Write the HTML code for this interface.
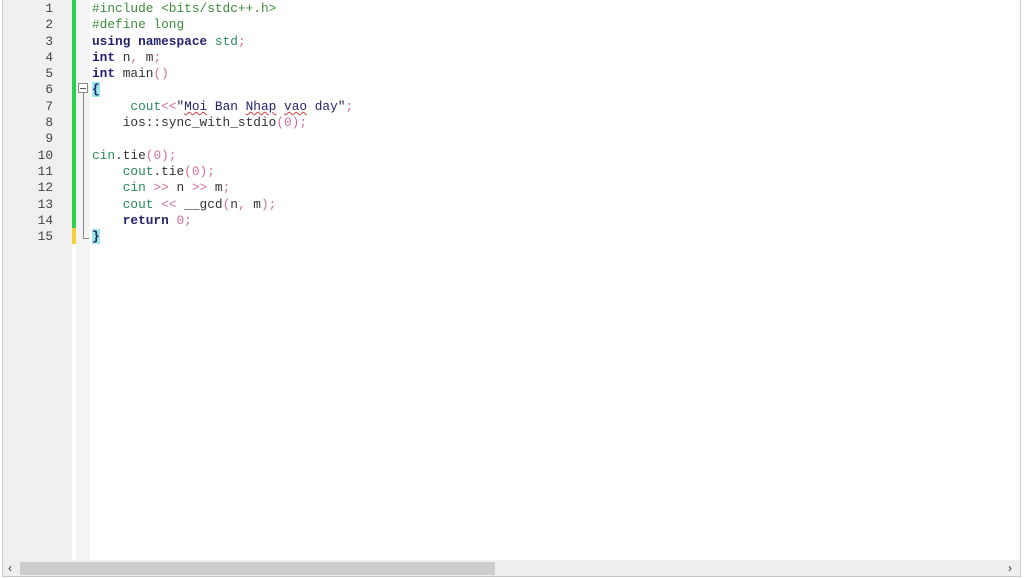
<!DOCTYPE html>
<html><head><meta charset="utf-8"><style>
html,body{margin:0;padding:0;width:1024px;height:578px;overflow:hidden;background:#fff;}
.frame{position:absolute;left:2px;top:0;width:1019px;height:577px;border-left:1px solid #c8c8c8;border-right:1px solid #c8c8c8;border-bottom:1px solid #c8c8c8;box-sizing:border-box;}
.gutter{position:absolute;left:3px;top:0;width:69px;height:560px;background:#f0f0f0;}
.fold{position:absolute;left:76px;top:0;width:14px;height:560px;background:#f4f4f4;}
.bar{position:absolute;left:72px;width:4px;background:#2ed04a;}
.nums{position:absolute;left:3px;top:1px;width:50px;text-align:right;font:12.8px/16.3px "Liberation Mono",monospace;color:#444;}
.code{position:absolute;left:92px;top:1px;font:12.8px/16.3px "Liberation Mono",monospace;color:#333;white-space:pre;}
.pp{color:#3c8c3c}
.kw{color:#22226e;font-weight:bold}
.op{color:#d0709a}
.st{color:#22226e}
.gr{color:#2a8a5a}
.sq{text-decoration:underline wavy #d04040;text-decoration-thickness:1px}
.hl{background:#9ee8e8}
.scroll{position:absolute;left:3px;top:560px;width:1017px;height:16px;background:#efefef;}
.thumb{position:absolute;left:20px;top:562px;width:475px;height:13px;background:#cdcdcd;}
.arr{position:absolute;top:560px;font:12px/16px "Liberation Sans",sans-serif;color:#333;}
</style></head><body>
<div class="frame"></div>
<div class="gutter"></div>
<div class="fold"></div>
<div class="bar" style="top:0;height:228px"></div>
<div class="bar" style="top:228px;height:16px;background:#f2d23a"></div>
<div style="position:absolute;left:78px;top:83px;width:10px;height:10px;border:1px solid #888;box-sizing:border-box;background:#fff"></div>
<div style="position:absolute;left:80px;top:88px;width:6px;height:1px;background:#555"></div>
<div style="position:absolute;left:83px;top:93px;width:1px;height:146px;background:#888"></div>
<div style="position:absolute;left:83px;top:238px;width:6px;height:1px;background:#888"></div>
<div class="nums">1<br>2<br>3<br>4<br>5<br>6<br>7<br>8<br>9<br>10<br>11<br>12<br>13<br>14<br>15</div>
<div class="code"><span class="pp">#include &lt;bits/stdc++.h&gt;</span>
<span class="pp">#define long</span>
<span class="kw">using namespace</span> <span class="gr">std</span><span class="op">;</span>
<span class="kw">int</span> n<span class="op">,</span> m<span class="op">;</span>
<span class="kw">int</span> main<span class="op">()</span>
<span class="hl kw">{</span>
     <span class="gr">cout</span><span class="op">&lt;&lt;</span><span class="st">"<span class="sq">Moi</span> Ban <span class="sq">Nhap</span> <span class="sq">vao</span> day"</span><span class="op">;</span>
    ios::sync_with_stdio<span class="op">(0);</span>

<span class="gr">cin</span>.tie<span class="op">(0);</span>
    <span class="gr">cout</span>.tie<span class="op">(0);</span>
    <span class="gr">cin</span> <span class="op">&gt;&gt;</span> n <span class="op">&gt;&gt;</span> m<span class="op">;</span>
    <span class="gr">cout</span> <span class="op">&lt;&lt;</span> __gcd<span class="op">(</span>n<span class="op">,</span> m<span class="op">);</span>
    <span class="kw">return</span> <span class="op">0;</span>
<span class="hl kw">}</span></div>
<div class="scroll"></div>
<div class="thumb"></div>
<div class="arr" style="left:8px">&#8249;</div>
<div class="arr" style="left:1008px">&#8250;</div>
</body></html>
